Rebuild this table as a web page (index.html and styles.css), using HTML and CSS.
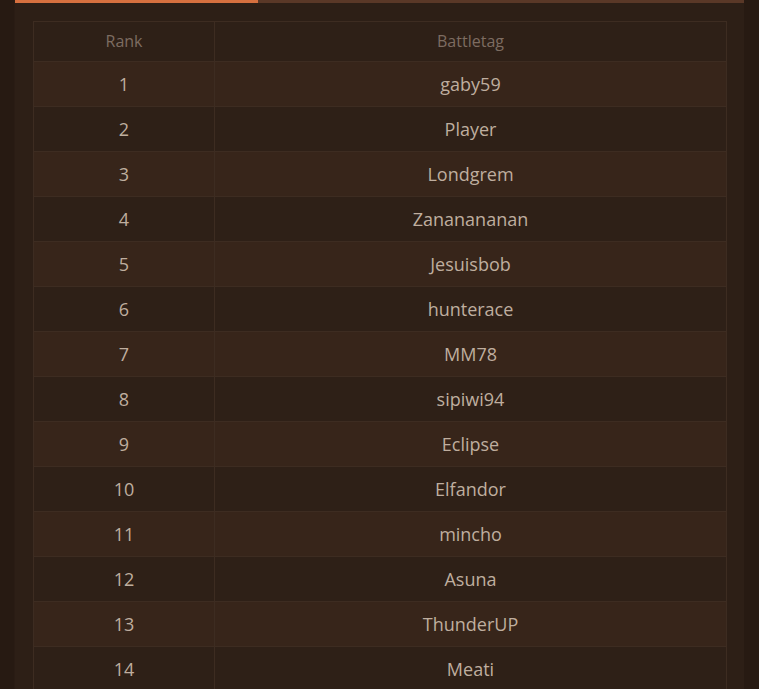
FILE: index.html
```html
<!DOCTYPE html>
<html>
<head>
<meta charset="utf-8">
<link rel="stylesheet" href="styles.css">
</head>
<body>
<div class="page">
  <div class="panel">
    <div class="tabbar"><div class="tab-active"></div><div class="tab-rest"></div></div>
    <div class="content">
      <table class="ranks">
        <thead>
          <tr><th class="col-rank">Rank</th><th>Battletag</th></tr>
        </thead>
        <tbody>
          <tr><td>1</td><td>gaby59</td></tr>
          <tr><td>2</td><td>Player</td></tr>
          <tr><td>3</td><td>Londgrem</td></tr>
          <tr><td>4</td><td>Zananananan</td></tr>
          <tr><td>5</td><td>Jesuisbob</td></tr>
          <tr><td>6</td><td>hunterace</td></tr>
          <tr><td>7</td><td>MM78</td></tr>
          <tr><td>8</td><td>sipiwi94</td></tr>
          <tr><td>9</td><td>Eclipse</td></tr>
          <tr><td>10</td><td>Elfandor</td></tr>
          <tr><td>11</td><td>mincho</td></tr>
          <tr><td>12</td><td>Asuna</td></tr>
          <tr><td>13</td><td>ThunderUP</td></tr>
          <tr><td>14</td><td>Meati</td></tr>
        </tbody>
      </table>
    </div>
  </div>
</div>
</body>
</html>
```
FILE: styles.css
```css
html, body {
  margin: 0;
  padding: 0;
  background: #271a12;
  height: 100%;
  overflow: hidden;
}
.page {
  padding-left: 14px;
  width: 730px;
}
.panel {
  background: #2d1f16;
  min-height: 700px;
  border-left: 1px solid #2a1c14;
}
.tabbar {
  display: flex;
  height: 3px;
}
.tab-active {
  width: 243px;
  background: #d6703f;
}
.tab-rest {
  flex: 1;
  background: #5a3827;
}
.content {
  padding: 18px 18px 0 18px;
}
.ranks {
  width: 694px;
  border-collapse: collapse;
  font-family: "Open Sans", "Noto Sans", sans-serif;
}
.ranks th, .ranks td {
  border: 1px solid #3d2c21;
  text-align: center;
  padding: 0 0 1px 0;
}
.ranks th {
  height: 38px;
  font-weight: normal;
  font-size: 16px;
  color: #7d6c61;
  background: #2e2017;
}
.col-rank {
  width: 180px;
}
.ranks td {
  height: 43px;
  font-size: 18px;
  color: #bfae9f;
}
.ranks tbody tr:nth-child(odd) td {
  background: #37251a;
}
.ranks tbody tr:nth-child(even) td {
  background: #2e2017;
}
```
